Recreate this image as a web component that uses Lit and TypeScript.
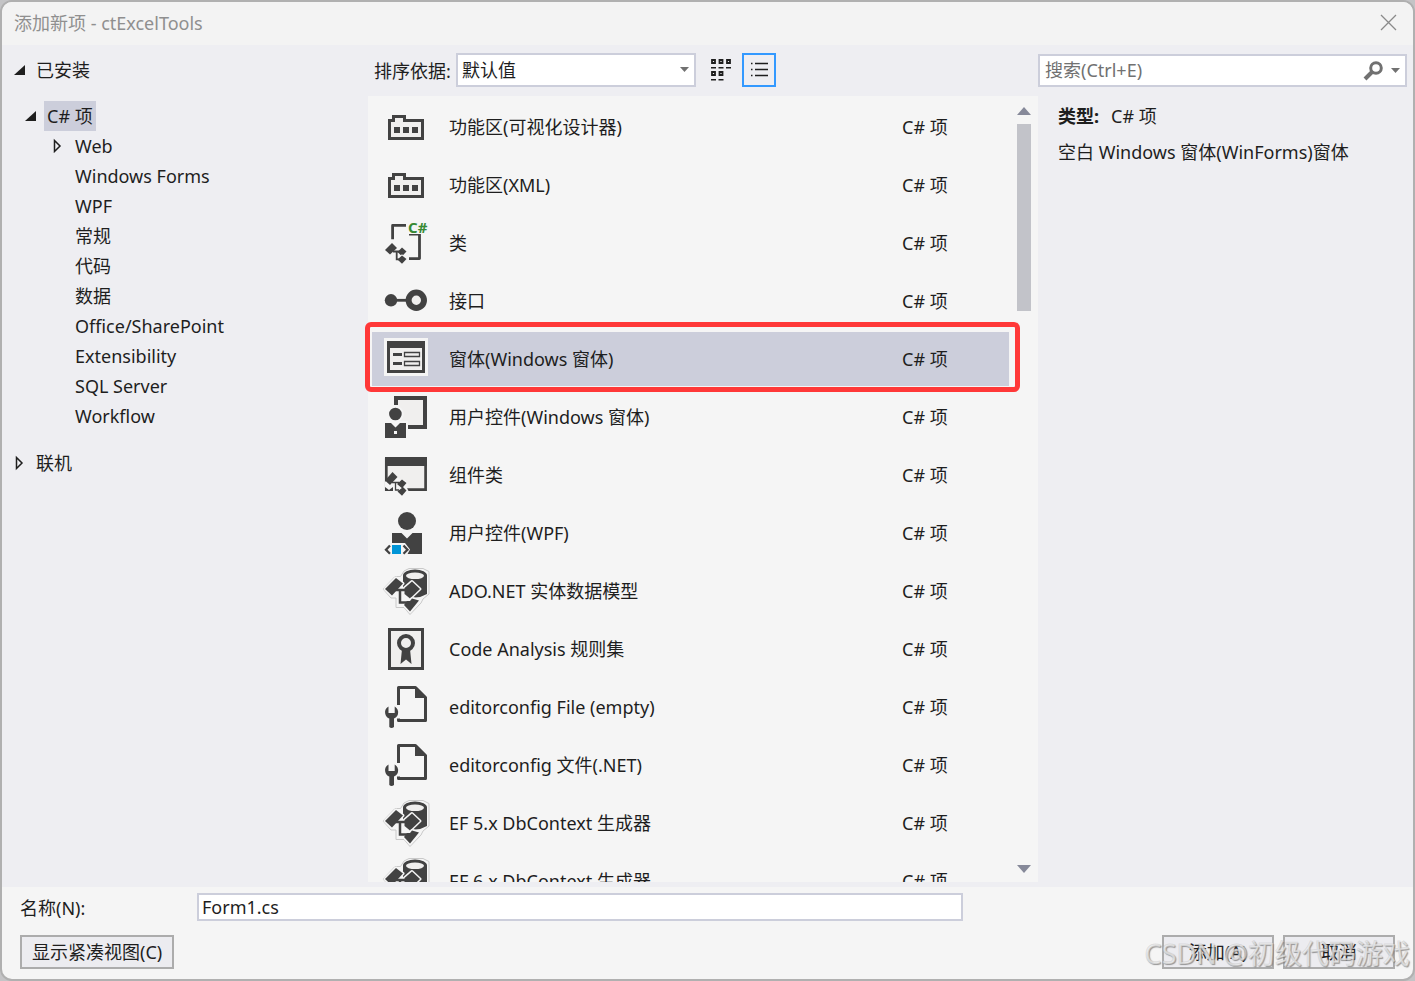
import { LitElement, html, css, svg } from "lit";
import { customElement, state } from "lit/decorators.js";
import { classMap } from "lit/directives/class-map.js";

const INK = "#424242";
const PAPER = "#f0efee";
const HALO = "#f5f5f5";

const diamonds = svg`
  <g fill=${INK} stroke=${HALO} stroke-width="2" paint-order="stroke">
    <path d="M0 28L7 21L12 26L5 32.5Z"/>
    <path d="M12.500 30L17 25.500L21.500 29.500L17 34.300Z"/>
    <path d="M12.500 37.500L17 33.500L21.500 37L17 41.700Z"/>
  </g>
  <path d="M8 29.5H15M11.7 29.5V37.3H15" fill="none" stroke=${INK} stroke-width="1.8"/>`;

const ICONS: Record<string, unknown> = {
  ribbon: svg`
    <path d="M4.5 14.5H8.5V10.5H19.5V14.5H37.5V32.5H4.5Z" fill=${PAPER} stroke=${INK} stroke-width="3"/>
    <path d="M9 21h6v6h-6zM18 21h6v6h-6zM27 21h6v6h-6z" fill=${INK}/>`,
  cls: svg`
    <path d="M7.6 17.3V3.4H21" fill="none" stroke=${INK} stroke-width="2.8" stroke-linejoin="round"/>
    <path d="M24 12.800H34.500" fill="none" stroke=${INK} stroke-width="1.500"/>
    <path d="M34.500 12V36.600H24" fill="none" stroke=${INK} stroke-width="2.800" stroke-linejoin="round"/>
    ${diamonds}
    <text x="23" y="10.500" font-size="15" font-weight="700" fill="#388a34">C#</text>`,
  iface: svg`
    <circle cx="6" cy="20.3" r="6.2" fill=${INK}/>
    <path d="M6 20.3H24" stroke=${INK} stroke-width="2.8"/>
    <circle cx="31.3" cy="20.3" r="7.7" fill=${PAPER} stroke=${INK} stroke-width="6"/>`,
  form: svg`
    <path d="M-1 0h44v38h-44z" fill=${HALO}/>
    <path d="M2 3h38v32h-38z" fill=${INK}/>
    <path d="M5 10h32v22h-32z" fill=${PAPER}/>
    <path d="M8 15h9v3h-9zM8 24h9v3h-9z" fill=${INK}/>
    <path d="M19.500 14.500h15v4h-15zM19.500 23.500h15v4h-15z" fill="none" stroke=${INK} stroke-width="1.300"/>`,
  userForm: svg`
    <path d="M11 2h29v29h-29z" fill=${PAPER} stroke=${INK} stroke-width="4"/>
    <path d="M7 9h7v16h9v10h-16z" fill=${HALO}/>
    <circle cx="10.4" cy="18" r="7.3" fill=${INK} stroke=${HALO} stroke-width="2"/>
    <path d="M-1 26h24v17h-24z" fill=${HALO}/>
    <path d="M0 27H6L10.5 31.5L15 27H21V42H0Z" fill=${INK}/>
    <path d="M9 35h3v3h-3z" fill=${HALO}/>`,
  component: svg`
    <path d="M1.3 5h39.3v30.7h-39.3z" fill=${PAPER} stroke=${INK} stroke-width="2.7"/>
    <path d="M0 3h42v9h-42z" fill=${INK}/>
    <path d="M0 28l8-9 8 7h4l4 5-2 3 2 4h-24z" fill=${HALO}/>
    <path d="M0 33l4 3 4-3v4h-8z" fill=${INK}/>
    <path d="M0 26.500L7.500 18L12.500 23L5 31Z" fill=${INK}/>
    <path d="M12 30L17 25.500L21.500 29L17 34.300ZM12.500 37.500L18 33L21.500 36.500L17 41.700Z" fill=${INK}/>
    <path d="M7 28.500H14M10.500 28.500V36H14" fill="none" stroke=${INK} stroke-width="1.300"/>`,
  userWpf: svg`
    <circle cx="22" cy="9" r="9" fill=${INK}/>
    <path d="M7 21H16.500L22 26.500L27.500 21H37V42H7Z" fill=${INK}/>
    <path d="M3 31H20L25 37.500L22 43H3Z" fill=${HALO}/>
    <path d="M7 33h9v9h-9z" fill="#0095d7"/>
    <path d="M5 33.500L1 37.700L5 41.800M18.500 33.500L22.500 37.700L18.500 41.800" fill="none" stroke=${INK} stroke-width="2.300"/>`,
  data: svg`
    <path d="M-2 19L10 6.500H15.500L19 1L24 -1.500H38L44 1.500V24L38 29L36 33L25 44.500L19 37.500H11V28H6Z"
      fill=${HALO} stroke="#c9c9c9" stroke-width="1"/>
    <path d="M18 5.500V24Q30 31 42 24V5.500Z" fill=${INK}/>
    <ellipse cx="30" cy="5.500" rx="12" ry="6" fill=${INK}/>
    <ellipse cx="30" cy="5.800" rx="9" ry="3.300" fill=${PAPER}/>
    <path d="M9 20H24M15 20V32.500H25" fill="none" stroke=${HALO} stroke-width="5"/>
    <g fill=${INK} stroke=${HALO} stroke-width="3" paint-order="stroke" stroke-linejoin="round">
      <path d="M0 19L11 8L18 13.500L7 25.500Z"/>
      <path d="M19.500 18L27 11.500L35 19L25 28.500L19.500 24Z"/>
      <path d="M19 35L22 31H25L27 28.500L34 30.500L25 41.500Z"/>
    </g>
    <path d="M9 20H24M15 20V32.500H25" fill="none" stroke=${INK} stroke-width="2.500"/>`,
  ruleset: svg`
    <path d="M4.500 1.500h33v39h-33z" fill=${PAPER} stroke=${INK} stroke-width="3"/>
    <path d="M17 21L15.500 36L21 31.500L26.500 36L25 21Z" fill=${INK}/>
    <circle cx="21" cy="15" r="7" fill=${PAPER} stroke=${INK} stroke-width="4"/>`,
  config: svg`
    <path d="M13.500 19V1.500H30.500L40.500 11.500V34.500H13.500V32.500" fill="none" stroke=${INK} stroke-width="3" stroke-linejoin="round"/>
    <path d="M30 1V12H42Z" fill=${INK}/>
    <path d="M3.500 20.500C0.500 22 -0.500 25 0.300 28C1 30.500 2.500 31.800 4.300 32.600V41Q6.500 43 9 41V32.600C11 31.800 12.500 30 13 28C13.700 25 12.500 22 9.700 20.500V27H3.500Z" fill=${INK}/>`,
};

interface Template {
  icon: string;
  name: string;
}

const TEMPLATES: Template[] = [
  { icon: "ribbon", name: "功能区(可视化设计器)" },
  { icon: "ribbon", name: "功能区(XML)" },
  { icon: "cls", name: "类" },
  { icon: "iface", name: "接口" },
  { icon: "form", name: "窗体(Windows 窗体)" },
  { icon: "userForm", name: "用户控件(Windows 窗体)" },
  { icon: "component", name: "组件类" },
  { icon: "userWpf", name: "用户控件(WPF)" },
  { icon: "data", name: "ADO.NET 实体数据模型" },
  { icon: "ruleset", name: "Code Analysis 规则集" },
  { icon: "config", name: "editorconfig File (empty)" },
  { icon: "config", name: "editorconfig 文件(.NET)" },
  { icon: "data", name: "EF 5.x DbContext 生成器" },
  { icon: "data", name: "EF 6.x DbContext 生成器" },
];

const CATEGORIES = [
  "Web", "Windows Forms", "WPF", "常规", "代码", "数据",
  "Office/SharePoint", "Extensibility", "SQL Server", "Workflow",
];

const openArrow = html`<svg class="arrow" viewBox="0 0 12 12" aria-hidden="true"><path d="M11 1V11H0Z" fill="#1e1e1e"/></svg>`;
const closedArrow = html`<svg class="arrow" viewBox="0 0 12 14" aria-hidden="true"><path d="M2.500 1.500L8 7L2.500 12.500Z" fill="none" stroke="#1e1e1e" stroke-width="1.500"/></svg>`;

@customElement("app-root")
export class AppRoot extends LitElement {
  @state() private selected = 4;

  static styles = css`
    :host {
      display: block;
      height: 100vh;
      background: #c4c4c6;
      color: #1e1e1e;
      font: 18px/30px "Noto Sans", "Noto Sans CJK SC", sans-serif;
    }
    * { box-sizing: border-box; }
    button, input, select { font: inherit; color: inherit; margin: 0; border-radius: 0; }
    svg { display: block; overflow: visible; }
    ul { list-style: none; margin: 0; padding: 0; }
    .dialog {
      position: relative;
      height: 100%;
      display: flex;
      flex-direction: column;
      border: 2px solid #b0b0b0;
      border-radius: 12px;
      background: #f5f5f5;
      overflow: hidden;
    }
    .titlebar {
      display: flex;
      flex: none;
      align-items: center;
      justify-content: space-between;
      height: 43px;
      padding: 0 16px 2px 12px;
      background: #f3f3f3;
      color: #8f8f8f;
    }
    .titlebar h1 { margin: 0; font-size: 18px; font-weight: 400; }
    .close { padding: 0; border: 0; background: none; }
    .close svg { width: 17px; height: 17px; }
    .body {
      flex: 1;
      min-height: 0;
      display: grid;
      grid-template-columns: 366px minmax(0, 1fr) 375px;
      grid-template-rows: minmax(0, 1fr);
      background: #eeeef2;
    }
    .tree { padding-top: 10px; }
    .node { display: flex; align-items: center; height: 30px; }
    .arrow { flex: none; width: 12px; height: 14px; }
    .root { padding-left: 12px; gap: 10px; }
    .branch { padding-left: 23px; gap: 7px; margin-top: 16px; }
    .active { padding: 0 3px; background: #cccedb; }
    .leaf { padding-left: 73px; }
    .leaf.parent { padding-left: 50px; gap: 11px; }
    .online { margin-top: 17px; }
    .center { display: flex; flex-direction: column; min-width: 0; padding-bottom: 5px; }
    .toolbar { display: flex; flex: none; align-items: center; height: 51px; padding: 0 0 2px 6px; }
    .toolbar label { width: 82px; padding-top: 2px; white-space: nowrap; }
    .combo { display: grid; align-items: center; width: 240px; }
    .combo > * { grid-area: 1 / 1; }
    .combo select {
      width: 100%;
      height: 34px;
      padding: 0 4px;
      border: 2px solid #cccedb;
      background: #fff;
      appearance: none;
    }
    .combo svg { justify-self: end; width: 9px; height: 5px; margin-right: 7px; pointer-events: none; }
    .view { display: grid; place-items: center; width: 34px; height: 34px; padding: 0; border: 2px solid transparent; background: none; }
    .view.grid { margin: 0 4px 0 8px; }
    .view.on { border-color: #3399ff; }
    .pane { flex: 1; min-height: 0; display: flex; background: #f5f5f5; }
    .list { flex: 1; min-width: 0; padding: 4px 8px 0 4px; overflow-y: clip; overflow-x: visible; }
    .row {
      position: relative;
      display: grid;
      grid-template-columns: 42px minmax(0, 1fr) 107px;
      column-gap: 22px;
      align-items: center;
      height: 54px;
      margin: 0 0 4px;
      padding-left: 13px;
      cursor: default;
    }
    .row svg { width: 42px; height: 42px; }
    .row.selected { background: #cccedb; }
    .row.selected::after {
      content: "";
      position: absolute;
      inset: -10px -11px -6px -7px;
      border: 5px solid #ff3838;
      border-radius: 6px;
      z-index: 1;
      pointer-events: none;
    }
    .scroll { display: flex; flex: none; flex-direction: column; align-items: center; justify-content: space-between; width: 21px; padding: 11px 7px 9px 0; }
    .scroll button { width: 14px; padding: 0; border: 0; background: none; }
    .scroll svg { width: 14px; height: 8px; }
    .track { flex: 1; width: 14px; margin: 9px 0; }
    .thumb { height: 25.5%; min-height: 30px; background: #c2c3c9; }
    .side { padding: 9px 6px 0 0; }
    .search { display: flex; align-items: center; height: 33px; padding: 0 5px; border: 2px solid #cccedb; background: #fff; }
    .search input { flex: 1; min-width: 0; height: 29px; padding: 0 0 2px; border: 0; outline: 0; background: none; }
    .search input::placeholder { color: #717171; opacity: 1; }
    .search button { padding: 0; border: 0; background: none; }
    .lens { width: 20px; height: 20px; }
    .drop { width: 9px; height: 5px; margin-left: 8px; }
    .details { padding: 14px 0 0 20px; }
    .details p { margin: 0 0 6px; }
    .details b { margin-right: 12px; }
    .footer { flex: none; padding: 6px 18px 10px; }
    .name { display: flex; align-items: flex-start; }
    .name label { width: 177px; }
    .name input { width: 766px; height: 28px; padding: 0 3px; border: 2px solid #cccedb; background: #fff; }
    .actions { display: flex; gap: 9px; margin-top: 12px; }
    .actions button { min-width: 112px; height: 34px; padding: 0 10px; border: 2px solid #acacac; background: #ececf0; white-space: nowrap; line-height: 30px; }
    .actions .first { margin-right: auto; }
    .watermark {
      position: absolute;
      right: 3px;
      bottom: 5px;
      font-size: 27px;
      line-height: 40px;
      color: rgba(245, 245, 245, 0.7);
      text-shadow: 1px 1px 1px rgba(110, 110, 110, 0.7);
      -webkit-text-stroke: 1px rgba(170, 170, 170, 0.3);
      pointer-events: none;
      white-space: nowrap;
    }
  `;

  private renderRow(t: Template, i: number) {
    const on = i === this.selected;
    return html`<li
      class=${classMap({ row: true, selected: on })}
      role="option"
      aria-selected=${on ? "true" : "false"}
      @click=${() => (this.selected = i)}
    >
      <svg viewBox="0 0 42 42" aria-hidden="true">${ICONS[t.icon]}</svg>
      <span>${t.name}</span>
      <span>C# 项</span>
    </li>`;
  }

  render() {
    return html`
      <div class="dialog" role="dialog" aria-labelledby="title">
        <header class="titlebar">
          <h1 id="title">添加新项 - ctExcelTools</h1>
          <button class="close" aria-label="关闭">
            <svg viewBox="0 0 17 17"><path d="M1 1L16 16M16 1L1 16" stroke="#8a8a8a" stroke-width="1.300"/></svg>
          </button>
        </header>

        <div class="body">
          <nav class="tree">
            <div class="node root">${openArrow}<span>已安装</span></div>
            <div class="node branch">${openArrow}<span class="active">C# 项</span></div>
            <ul>
              ${CATEGORIES.map((c, i) => html`<li class=${classMap({ node: true, leaf: true, parent: i === 0 })}>
                ${i === 0 ? closedArrow : ""}<span>${c}</span>
              </li>`)}
            </ul>
            <div class="node root online">${closedArrow}<span>联机</span></div>
          </nav>

          <main class="center">
            <div class="toolbar">
              <label for="sort">排序依据:</label>
              <div class="combo">
                <select id="sort"><option>默认值</option></select>
                <svg viewBox="0 0 9 5" aria-hidden="true"><path d="M0 0H9L4.500 5Z" fill="#717171"/></svg>
              </div>
              <button class="view grid" aria-label="图标视图">
                <svg width="20" height="22" viewBox="0 0 20 22">
                  <path d="M1 1h3v3h-3zM8.500 1h3v3h-3zM16 1h3v3h-3zM1 13h3v3h-3zM8.500 13h3v3h-3z" fill="none" stroke="#1e1e1e" stroke-width="1.800"/>
                  <path d="M0 8.700h5M7.500 8.700h5M15 8.700h5M0 20.700h5M7.500 20.700h5" stroke="#1e1e1e" stroke-width="1.400"/>
                </svg>
              </button>
              <button class="view on" aria-label="列表视图">
                <svg width="17" height="16" viewBox="0 0 17 16">
                  <path d="M0 1.500h1.500M4 1.500h13M0 7.500h1.500M4 7.500h13M0 13.500h1.500M4 13.500h13" stroke="#1e1e1e" stroke-width="1.400"/>
                </svg>
              </button>
            </div>
            <div class="pane">
              <ul class="list" role="listbox" aria-label="模板">
                ${TEMPLATES.map((t, i) => this.renderRow(t, i))}
              </ul>
              <div class="scroll">
                <button aria-label="向上滚动"><svg viewBox="0 0 14 8"><path d="M0 8H14L7 0Z" fill="#868999"/></svg></button>
                <div class="track"><div class="thumb"></div></div>
                <button aria-label="向下滚动"><svg viewBox="0 0 14 8"><path d="M0 0H14L7 8Z" fill="#868999"/></svg></button>
              </div>
            </div>
          </main>

          <aside class="side">
            <div class="search">
              <input type="text" aria-label="搜索" placeholder="搜索(Ctrl+E)" />
              <button aria-label="搜索">
                <svg class="lens" viewBox="0 0 20 20"><circle cx="13" cy="7" r="5.300" fill="none" stroke="#717171" stroke-width="3"/><path d="M9.500 10.500L2 18" stroke="#717171" stroke-width="4"/></svg>
              </button>
              <button aria-label="搜索选项">
                <svg class="drop" viewBox="0 0 9 5"><path d="M0 0H9L4.500 5Z" fill="#717171"/></svg>
              </button>
            </div>
            <div class="details">
              <p><b>类型:</b>C# 项</p>
              <p>空白 Windows 窗体(WinForms)窗体</p>
            </div>
          </aside>
        </div>

        <footer class="footer">
          <div class="name">
            <label for="name">名称(N):</label>
            <input id="name" type="text" .value=${"Form1.cs"} />
          </div>
          <div class="actions">
            <button class="first">显示紧凑视图(C)</button>
            <button>添加(A)</button>
            <button>取消</button>
          </div>
        </footer>
        <div class="watermark">CSDN @初级代码游戏</div>
      </div>
    `;
  }
}
